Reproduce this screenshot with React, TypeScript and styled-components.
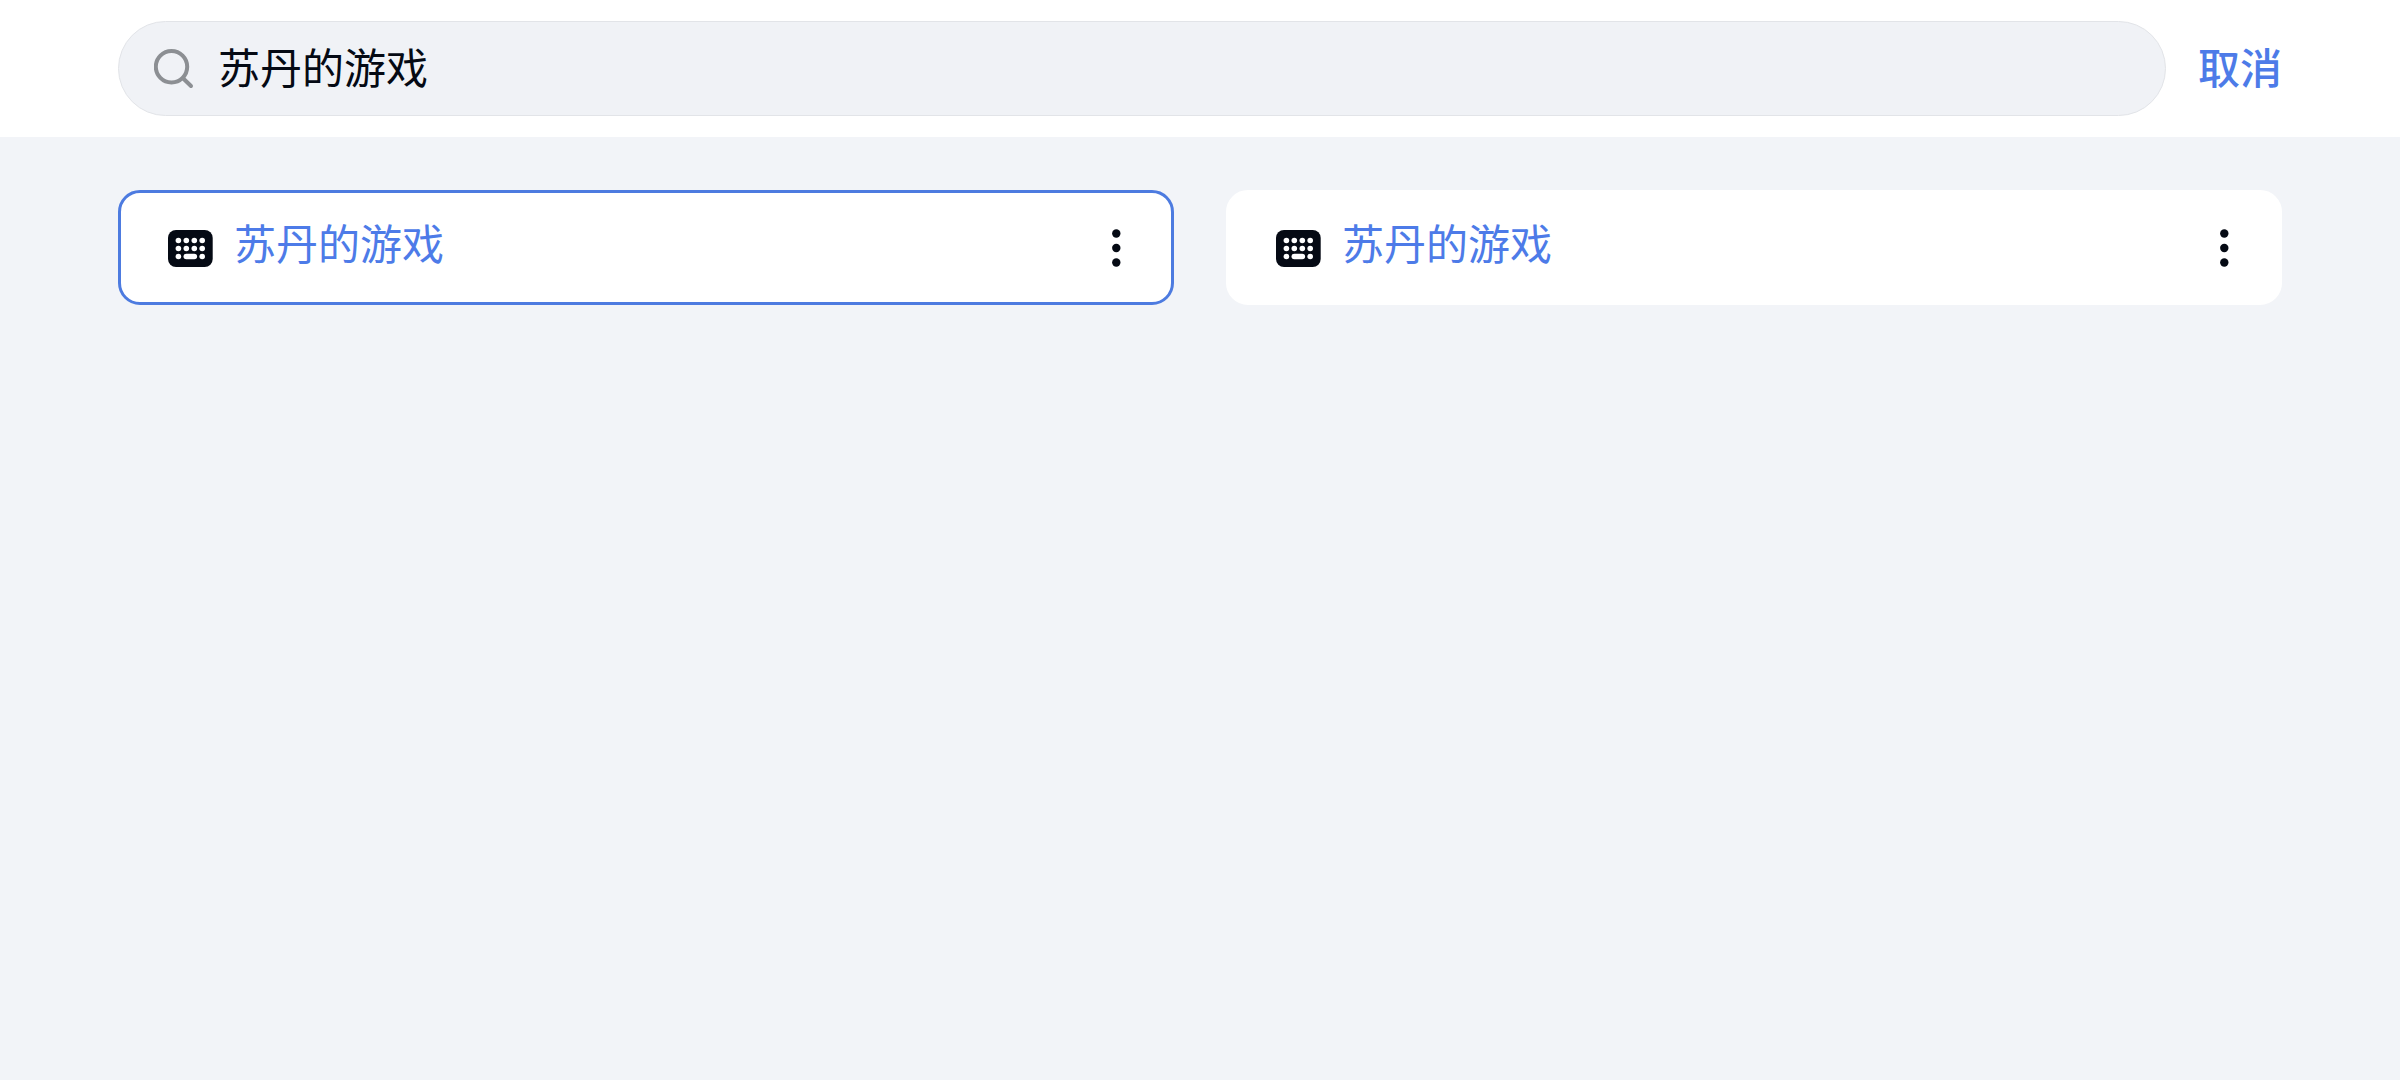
import React, { useState } from "react";
import styled, { createGlobalStyle } from "styled-components";

const GlobalStyle = createGlobalStyle`
  *, *::before, *::after { box-sizing: border-box; }
  body {
    margin: 0;
    background: #f2f4f8;
    color: #050a14;
    font-family: "Noto Sans CJK SC", "Noto Sans", sans-serif;
    font-size: 42px;
    line-height: 60px;
  }
  button, input { font: inherit; color: inherit; }
  button { border: 0; padding: 0; background: none; cursor: pointer; }
`;

const Header = styled.header`
  display: flex;
  align-items: center;
  gap: 32px;
  padding: 21px 118px;
  background: #ffffff;
`;

const SearchBox = styled.label`
  flex: 1;
  display: flex;
  align-items: center;
  gap: 24px;
  height: 95px;
  padding: 0 35px;
  border: 1px solid #e2e4e8;
  border-radius: 48px;
  background: #f0f2f6;
`;

const SearchInput = styled.input`
  flex: 1;
  min-width: 0;
  height: 66px;
  padding: 0 0 6px;
  border: 0;
  outline: 0;
  background: transparent;
`;

const CancelButton = styled.button`
  && {
    padding-bottom: 6px;
    color: #4d7be8;
    font-weight: 500;
  }
`;

const Results = styled.ul`
  display: grid;
  grid-template-columns: 1fr 1fr;
  gap: 52px;
  margin: 0;
  padding: 53px 118px;
  list-style: none;
`;

const Card = styled.li<{ $active?: boolean }>`
  display: flex;
  align-items: center;
  gap: 20px;
  height: 115px;
  padding: 0 45px 0 47px;
  border: 3px solid ${(p) => (p.$active ? "#4d7be0" : "#ffffff")};
  border-radius: 22px;
  background: #ffffff;
`;

const CardTitle = styled.a`
  flex: 1;
  padding-bottom: 12px;
  color: #4d7be8;
  text-decoration: none;
`;

const MoreButton = styled.button`
  display: flex;
  justify-content: center;
  width: 20px;
`;

const Icon = styled.svg`
  display: block;
  flex: none;
`;

const SearchIcon = () => (
  <Icon width="40" height="40" viewBox="0 0 40 40" fill="none" stroke="#8c8f93" strokeWidth="4" aria-hidden="true">
    <circle cx="17.5" cy="17.7" r="15.7" />
    <path d="M29 29.2 37 37" strokeLinecap="round" />
  </Icon>
);

const KeyboardIcon = () => (
  <Icon width="46" height="38" viewBox="0 0 46 38" aria-hidden="true">
    <rect y="1" width="44.7" height="37" rx="8" fill="#050a14" />
    <g fill="#ffffff">
      {[11.5, 19.5, 27.5].map((y) =>
        [10.4, 18.3, 26.3, 34.2].map((x, col) =>
          y > 26 && (col === 1 || col === 2) ? null : <circle key={`${x}-${y}`} cx={x} cy={y} r="2.8" />
        )
      )}
      <rect x="15.5" y="24.7" width="13.6" height="5.6" rx="2.8" />
    </g>
  </Icon>
);

const MoreIcon = () => (
  <Icon width="10" height="38" viewBox="0 0 10 38" fill="#050a14" aria-hidden="true">
    <circle cx="5.3" cy="4.5" r="4.2" />
    <circle cx="5.3" cy="19" r="4.2" />
    <circle cx="5.3" cy="33.5" r="4.2" />
  </Icon>
);

const results = [
  { id: 1, title: "苏丹的游戏", active: true },
  { id: 2, title: "苏丹的游戏", active: false },
];

export default function App() {
  const [query, setQuery] = useState("苏丹的游戏");
  return (
    <>
      <GlobalStyle />
      <Header>
        <SearchBox>
          <SearchIcon />
          <SearchInput
            type="text"
            aria-label="搜索"
            value={query}
            onChange={(e) => setQuery(e.target.value)}
          />
        </SearchBox>
        <CancelButton type="button">取消</CancelButton>
      </Header>
      <main>
        <Results>
          {results.map((r) => (
            <Card key={r.id} $active={r.active}>
              <KeyboardIcon />
              <CardTitle href="#">{r.title}</CardTitle>
              <MoreButton type="button" aria-label="更多">
                <MoreIcon />
              </MoreButton>
            </Card>
          ))}
        </Results>
      </main>
    </>
  );
}
